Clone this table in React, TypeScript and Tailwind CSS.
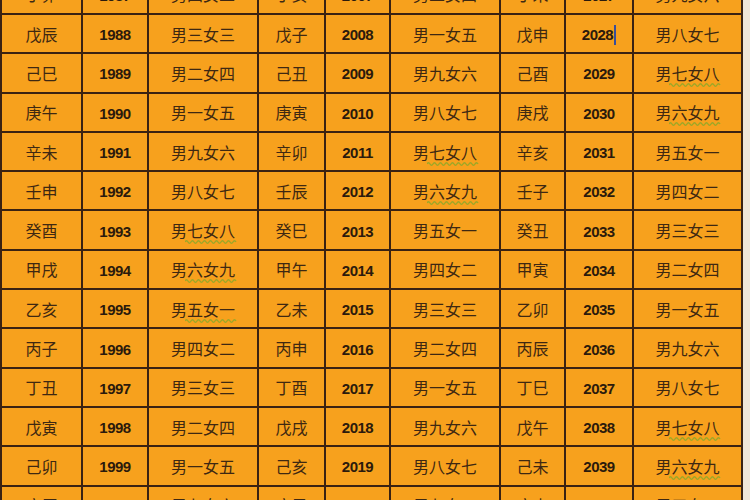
import React from "react";

type Cell = { gz: string; year: string; kua: string; wavy?: boolean; cursor?: boolean };
type Row = Cell[];

const rows: Row[] = [
  [
    { gz: "丁卯", year: "1987", kua: "男四女二" },
    { gz: "丁亥", year: "2007", kua: "男二女四" },
    { gz: "丁未", year: "2027", kua: "男九女六" },
  ],
  [
    { gz: "戊辰", year: "1988", kua: "男三女三" },
    { gz: "戊子", year: "2008", kua: "男一女五" },
    { gz: "戊申", year: "2028", kua: "男八女七", cursor: true },
  ],
  [
    { gz: "己巳", year: "1989", kua: "男二女四" },
    { gz: "己丑", year: "2009", kua: "男九女六" },
    { gz: "己酉", year: "2029", kua: "男七女八", wavy: true },
  ],
  [
    { gz: "庚午", year: "1990", kua: "男一女五" },
    { gz: "庚寅", year: "2010", kua: "男八女七" },
    { gz: "庚戌", year: "2030", kua: "男六女九", wavy: true },
  ],
  [
    { gz: "辛未", year: "1991", kua: "男九女六" },
    { gz: "辛卯", year: "2011", kua: "男七女八", wavy: true },
    { gz: "辛亥", year: "2031", kua: "男五女一" },
  ],
  [
    { gz: "壬申", year: "1992", kua: "男八女七" },
    { gz: "壬辰", year: "2012", kua: "男六女九", wavy: true },
    { gz: "壬子", year: "2032", kua: "男四女二" },
  ],
  [
    { gz: "癸酉", year: "1993", kua: "男七女八", wavy: true },
    { gz: "癸巳", year: "2013", kua: "男五女一" },
    { gz: "癸丑", year: "2033", kua: "男三女三" },
  ],
  [
    { gz: "甲戌", year: "1994", kua: "男六女九", wavy: true },
    { gz: "甲午", year: "2014", kua: "男四女二" },
    { gz: "甲寅", year: "2034", kua: "男二女四" },
  ],
  [
    { gz: "乙亥", year: "1995", kua: "男五女一", wavy: true },
    { gz: "乙未", year: "2015", kua: "男三女三" },
    { gz: "乙卯", year: "2035", kua: "男一女五" },
  ],
  [
    { gz: "丙子", year: "1996", kua: "男四女二" },
    { gz: "丙申", year: "2016", kua: "男二女四" },
    { gz: "丙辰", year: "2036", kua: "男九女六" },
  ],
  [
    { gz: "丁丑", year: "1997", kua: "男三女三" },
    { gz: "丁酉", year: "2017", kua: "男一女五" },
    { gz: "丁巳", year: "2037", kua: "男八女七" },
  ],
  [
    { gz: "戊寅", year: "1998", kua: "男二女四" },
    { gz: "戊戌", year: "2018", kua: "男九女六" },
    { gz: "戊午", year: "2038", kua: "男七女八", wavy: true },
  ],
  [
    { gz: "己卯", year: "1999", kua: "男一女五" },
    { gz: "己亥", year: "2019", kua: "男八女七" },
    { gz: "己未", year: "2039", kua: "男六女九", wavy: true },
  ],
  [
    { gz: "庚辰", year: "2000", kua: "男九女六" },
    { gz: "庚子", year: "2020", kua: "男七女八" },
    { gz: "庚申", year: "2040", kua: "男五女一" },
  ],
];

const cjk = "font-['Noto_Sans_CJK_SC',sans-serif] text-[16px] leading-[20px] text-[#3e2812]";
const num = "font-['Liberation_Sans',Arial,sans-serif] font-bold text-[15px] leading-[20px] pt-[3px] text-[#2b1a0c] tracking-[-0.5px]";

function Wavy() {
  return (
    <svg className="absolute left-[14px] top-[19px]" width="52" height="5" viewBox="0 0 52 5">
      <path
        d="M0 3 Q1.5 0.5 3 3 T6 3 T9 3 T12 3 T15 3 T18 3 T21 3 T24 3 T27 3 T30 3 T33 3 T36 3 T39 3 T42 3 T45 3 T48 3 T51 3"
        fill="none"
        stroke="#9aa828"
        strokeWidth="1.4"
      />
    </svg>
  );
}

function CellGroup({ c }: { c: Cell }) {
  return (
    <>
      <div className={`flex items-center justify-center bg-[#f7a11d] ${cjk}`}>{c.gz}</div>
      <div className={`flex items-center justify-center bg-[#f7a11d] ${num}`}>
        {c.year}
        {c.cursor && <span className="ml-[1px] inline-block h-[20px] w-[2px] bg-[#3a4e9a]" />}
      </div>
      <div className={`flex items-center justify-center bg-[#f7a11d] ${cjk}`}>
        <span className="relative">
          {c.kua}
          {c.wavy && <Wavy />}
        </span>
      </div>
    </>
  );
}

export default function App() {
  return (
    <div className="h-[500px] w-[750px] overflow-hidden bg-[#efe6d8]">
      <div className="-mt-[26.3px] w-[743px] bg-[#3a2212] p-[2px]">
        <div className="grid grid-cols-[79px_64px_108px_65px_63px_108px_63px_66px_107px] auto-rows-[37.3px] gap-[2px]">
          {rows.map((r, i) => (
            <React.Fragment key={i}>
              {r.map((c, j) => (
                <CellGroup key={j} c={c} />
              ))}
            </React.Fragment>
          ))}
        </div>
      </div>
    </div>
  );
}
